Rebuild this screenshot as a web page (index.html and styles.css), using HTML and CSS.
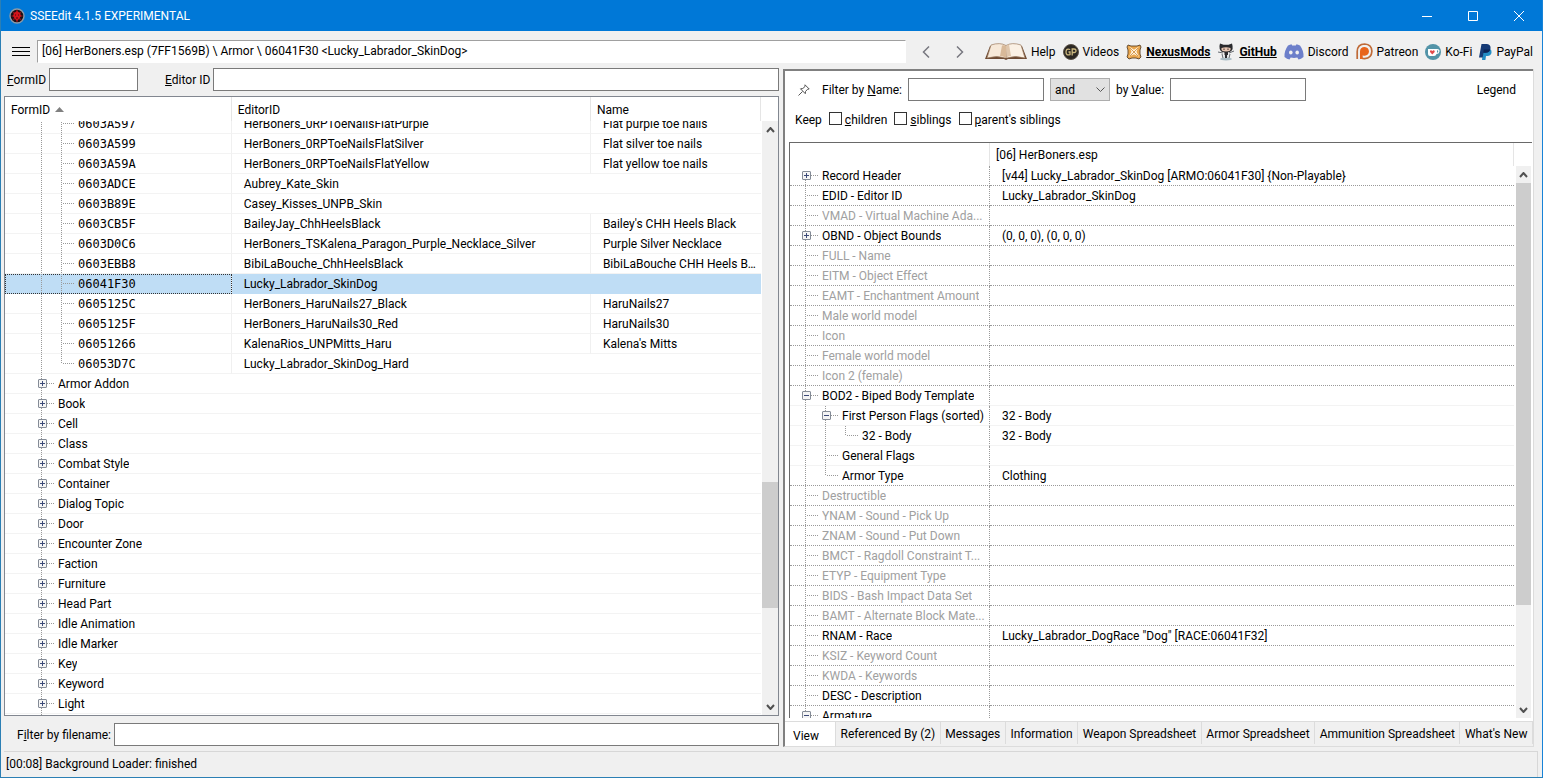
FILE: index.html
```html
<!DOCTYPE html>
<html lang="en">

<head>
    <meta charset="UTF-8" />
    <meta name="viewport" content="width=device-width, initial-scale=1.0" />
    <title>SSEEdit 4.1.5 EXPERIMENTAL</title>
    <link rel="stylesheet" href="styles.css">
</head>

<body>
    <header class="titlebar">
        <svg class="appIcon" viewBox="0 0 16 16" width="16" height="16">
            <circle cx="8" cy="8" r="7" fill="#191015" stroke="#8d9aa8" stroke-width="1.4" />
            <path d="M8 2v12M2.5 8h11M4 4l8 8M12 4l-8 8" stroke="#7c1218" stroke-width="1.6" />
            <path d="M5 5l3-2 3 2 1 3-2 3-2 2-2-2-2-3z" fill="#d3141b" />
            <path d="M6 7h1M9 7h1M8 9v2" stroke="#4b070b" />
        </svg>
        <h1>SSEEdit 4.1.5 EXPERIMENTAL</h1>
        <div class="windowButtons">
            <button aria-label="Minimize"><svg width="10" height="10"><path d="M0 5.5h10" /></svg></button>
            <button aria-label="Maximize"><svg width="10" height="10"><path d="M.5 .5h9v9h-9z" /></svg></button>
            <button aria-label="Close"><svg width="10" height="10"><path d="M0 0l10 10M10 0L0 10" /></svg></button>
        </div>
    </header>

    <div class="toolbar">
        <button class="menuButton" aria-label="Menu"><svg width="18" height="10"><path d="M0 .5h18M0 4.5h18M0 8.5h18" stroke="#000" /></svg></button>
        <input class="address" aria-label="Path" value="[06] HerBoners.esp (7FF1569B) \ Armor \ 06041F30 &lt;Lucky_Labrador_SkinDog&gt;">
        <div class="history">
            <button aria-label="Back"><svg width="8" height="12"><path d="M7 .5L1.500 6 7 11.500" /></svg></button>
            <button aria-label="Forward"><svg width="8" height="12"><path d="M1 .5L6.500 6 1 11.500" /></svg></button>
        </div>
        <nav class="links">
            <a href="#">
                <svg width="42" height="18" viewBox="0 0 42 18">
                    <path d="M5 3L0 16h19l2 1 2-1h19L37 3z" fill="#6d4a33" />
                    <path d="M6 2Q15-1 21 2.500L20.500 15Q12 12 2 15z" fill="#f6e8d8" stroke="#9b7b60" stroke-width=".7" />
                    <path d="M36 2Q27-1 21 2.500L21.500 15Q30 12 40 15z" fill="#fbf1e5" stroke="#9b7b60" stroke-width=".7" />
                    <path d="M17 2.500Q20 2 21 3V15Q18 13 15 13z" fill="#d8b999" />
                    <path d="M21 3Q23 1.500 24 1.500L26 13Q23 13 21.500 15z" fill="#dfc6ac" />
                </svg>Help</a>
            <a href="#">
                <svg width="16" height="16" viewBox="0 0 16 16">
                    <circle cx="8" cy="8" r="7.500" fill="#2b2722" stroke="#5a5146" />
                    <path d="M7.200 5.500Q3 4 3 8t4 2.600V8H5.500M9.200 11.500V5h1.800q2 0 2 1.800T11 8.500H9.200" fill="none" stroke="#cdb980" stroke-width="1.300" />
                </svg>Videos</a>
            <a href="#" class="strong">
                <svg width="16" height="16" viewBox="0 0 16 16">
                    <path d="M2 1l3 1h6l3-1 1 2-1 3v4l1 3-2 2-3-1H6l-3 1-2-2 1-3V6L1 3z" fill="#e9a54c" stroke="#5b4329" stroke-width=".9" />
                    <path d="M3.500 2.800l4.500 3 4.500-3-2 5 2.500 5-5-2.500-5 2.500 2.500-5z" fill="#fff3dc" />
                    <path d="M4 4l8 8M12 4l-8 8" stroke="#c98434" stroke-width=".8" />
                </svg>NexusMods</a>
            <a href="#" class="strong">
                <svg width="18" height="18" viewBox="0 0 18 18">
                    <ellipse cx="9" cy="16" rx="6" ry="1.500" fill="#a9bcc5" />
                    <path d="M3 .5l3.500 1.200h5L15 .5q1 3 .6 5.500-1 3-4.600 3.300V15H7.500V9.500Q3.500 9 2.700 6 2 3 3 .5z" fill="#2a2a2d" />
                    <path d="M4.500 5q4.500-1.500 9 0 1 3.500-4.500 3.500T4.500 5z" fill="#e6c5b2" />
                    <path d="M7 5.500v1.500M11 5.500v1.500" stroke="#45302b" />
                    <path d="M1 9l5 1M17 8l-5 2M6 15l-1-4M12 15l1-4" stroke="#666b70" fill="none" />
                    <path d="M7 12h1v3H7zM10 12h1v3h-1z" fill="#dce3e7" />
                </svg>GitHub</a>
            <a href="#">
                <svg width="20" height="16" viewBox="0 0 20 16">
                    <path d="M4 1.500Q6 .5 7.500.3L8.200 1.500h3.600L12.500.3Q14 .5 16 1.500 20 7 19.500 13 17 15 14.500 15.500L13.300 13.500Q10 14.300 6.700 13.500L5.500 15.500Q3 15 .5 13 0 7 4 1.500z" fill="#6c7fca" />
                    <ellipse cx="6.800" cy="8.500" rx="1.800" ry="2" fill="#f0f0f0" />
                    <ellipse cx="13.200" cy="8.500" rx="1.800" ry="2" fill="#f0f0f0" />
                </svg>Discord</a>
            <a href="#">
                <svg width="17" height="17" viewBox="0 0 17 17">
                    <path d="M1.200 16V8.500Q1.500 1 8.700 1q7 .4 7.200 7.300-.4 7-7.200 7.300-2 0-3.300-.7" fill="none" stroke="#bf6a37" stroke-width="1.700" />
                    <path d="M4 16V8.500Q4 4 8.700 4q4 .3 4.300 4.500-.4 4-4.300 4.200-1.200 0-2-.5V16z" fill="#e8641b" />
                </svg>Patreon</a>
            <a href="#">
                <svg width="16" height="16" viewBox="0 0 16 16">
                    <circle cx="8" cy="8" r="8" fill="#5394a8" />
                    <path d="M3 5h9q3 0 2.500 2.500T11.500 10Q11 12 9 12H5q-2 0-2-2z" fill="#fff" />
                    <path d="M12 6.300q1.500 0 1.200 1.200T12 8.700z" fill="#5394a8" />
                    <path d="M7.300 10.500L5 8q-.3-2 1.200-1.700l1.100.7 1.100-.7Q10 6 9.700 8z" fill="#e34b4b" />
                </svg>Ko-Fi</a>
            <a href="#">
                <svg width="13" height="16" viewBox="0 0 13 16">
                    <path d="M4 5h7q2 1 1.500 4-1 3-4 3H7l-.6 4H3z" fill="#238dc5" />
                    <path d="M2.500 0H8q4 .5 3.500 4.500Q11 8.700 6.500 8.700H4.500L3.700 13.500H0z" fill="#153a75" />
                    <path d="M4.800 5.500h6.400Q10 8.700 6.500 8.700H4.300z" fill="#0b2456" />
                </svg>PayPal</a>
        </nav>
    </div>

    <main class="panes">
        <section class="leftPane">
            <div class="search">
                <label for="formId"><u>F</u>ormID</label>
                <input id="formId" class="formIdBox">
                <label for="editorId"><u>E</u>ditor ID</label>
                <input id="editorId" class="grow">
            </div>
            <div class="treeBox navTree">
                <div class="treeView" id="navView">
                    <table>
                        <colgroup>
                            <col class="colForm">
                            <col class="colEditor">
                            <col>
                        </colgroup>
                        <thead>
                            <tr>
                                <th>FormID <svg width="9" height="5"><path d="M0 5L4.500 0 9 5z" fill="#808080" /></svg></th>
                                <th>EditorID</th>
                                <th>Name</th>
                            </tr>
                        </thead>
                        <tbody id="navRows"></tbody>
                    </table>
                </div>
                <div class="scrollbar">
                    <button aria-label="Scroll up"><svg width="9" height="6"><path d="M1 5l3.500-4L8 5" /></svg></button>
                    <div class="track"><div class="thumb navThumb"></div></div>
                    <button aria-label="Scroll down"><svg width="9" height="6"><path d="M1 1l3.500 4L8 1" /></svg></button>
                </div>
            </div>
            <div class="fileFilter">
                <label for="fileName">F<u>i</u>lter by filename:</label>
                <input id="fileName" class="grow">
            </div>
        </section>

        <section class="rightPane">
            <div class="viewPage">
                <div class="filters">
                    <button class="pin" aria-label="Pin"><svg width="12" height="12" viewBox="0 0 12 12"><path d="M7 .8L11.200 5 9.500 5.300 7.500 7.500 7.300 9.700 2.500 4.800 4.800 4.500 7 2.500zM4.500 7.500L.5 11.500" /></svg></button>
                    <label for="byName">Filter by <u>N</u>ame:</label>
                    <input id="byName">
                    <select aria-label="Combine filters">
                        <option>and</option>
                        <option>or</option>
                    </select>
                    <label for="byValue">by <u>V</u>alue:</label>
                    <input id="byValue">
                    <a href="#" class="legend">Legend</a>
                </div>
                <div class="keep">
                    <span>Keep</span>
                    <label><input type="checkbox"><span><u>c</u>hildren</span></label>
                    <label><input type="checkbox"><span><u>s</u>iblings</span></label>
                    <label><input type="checkbox"><span><u>p</u>arent's siblings</span></label>
                </div>
                <div class="treeBox recordTree">
                    <div class="treeView">
                        <table>
                            <colgroup>
                                <col class="colField">
                                <col>
                            </colgroup>
                            <thead>
                                <tr>
                                    <th></th>
                                    <th>[06] HerBoners.esp</th>
                                </tr>
                            </thead>
                            <tbody id="recordRows"></tbody>
                        </table>
                    </div>
                    <div class="scrollbar">
                        <button aria-label="Scroll up"><svg width="9" height="6"><path d="M1 5l3.500-4L8 5" /></svg></button>
                        <div class="track"><div class="thumb recordThumb"></div></div>
                        <button aria-label="Scroll down"><svg width="9" height="6"><path d="M1 1l3.500 4L8 1" /></svg></button>
                    </div>
                </div>
            </div>
            <div class="tabs">
                <button class="active">View</button>
                <button>Referenced By (2)</button>
                <button>Messages</button>
                <button>Information</button>
                <button>Weapon Spreadsheet</button>
                <button>Armor Spreadsheet</button>
                <button>Ammunition Spreadsheet</button>
                <button>What's New</button>
            </div>
        </section>
    </main>

    <footer class="status">[00:08] Background Loader: finished</footer>
    <script src="script.js"></script>
</body>

</html>
```
FILE: styles.css
```css
* {
    box-sizing: border-box;
}

body {
    margin: 0;
    height: 100vh;
    display: flex;
    flex-direction: column;
    overflow: hidden;
    background: #f0f0f0;
    border: 1px solid #2b7fb4;
    border-top: none;
    border-right-color: #1883d7;
    color: #000;
    font-family: Roboto, "Open Sans", sans-serif;
    font-size: 12px;
    line-height: 16px;
}

button,
input,
select {
    font: inherit;
    color: inherit;
    margin: 0;
}

button {
    display: flex;
    align-items: center;
    justify-content: center;
    padding: 0;
    border: none;
    background: none;
}

svg {
    flex: none;
}

a {
    color: inherit;
    text-decoration: none;
}

input {
    height: 23px;
    min-width: 0;
    padding: 0 4px;
    border: 1px solid #7a7a7a;
    background: #fff;
}

.grow {
    flex: 1;
}

/* title bar */
.titlebar {
    display: flex;
    align-items: center;
    flex: none;
    height: 31px;
    padding-left: 8px;
    background: #0078d7;
    color: #fff;
}

.titlebar h1 {
    margin: 0 0 0 5px;
    font-size: 12px;
    font-weight: normal;
}

.windowButtons {
    display: flex;
    margin-left: auto;
}

.windowButtons button {
    width: 46px;
    height: 30px;
}

.windowButtons path {
    fill: none;
    stroke: #fff;
}

/* toolbar */
.toolbar {
    display: flex;
    align-items: center;
    flex: none;
    height: 37px;
    padding: 4px 9px 0 11px;
}

.menuButton {
    margin-right: 7px;
}

.address {
    flex: 1;
    padding-bottom: 2px;
    border-color: #a0a0a0 #fff #fff #a0a0a0;
}

.history {
    display: flex;
    gap: 26px;
    margin: 0 21px 0 16px;
}

.history path {
    fill: none;
    stroke: #77777f;
    stroke-width: 1.5;
}

.links {
    display: flex;
    gap: 7px;
}

.links a {
    display: flex;
    align-items: center;
    gap: 4px;
}

.links .strong {
    font-weight: bold;
    text-decoration: underline;
}

/* panes */
.panes {
    flex: 1;
    min-height: 0;
    display: grid;
    grid-template-columns: 782fr 751fr;
    padding-right: 8px;
}

.leftPane {
    display: flex;
    flex-direction: column;
    min-width: 0;
    min-height: 0;
    padding: 0 4px 0 3px;
}

.search,
.fileFilter {
    display: flex;
    align-items: center;
    flex: none;
    gap: 3px;
    padding-left: 3px;
}

.search {
    margin-bottom: 5px;
}

.formIdBox {
    width: 89px;
    margin-right: 24px;
}

.fileFilter {
    margin: 7px 0 5px;
    padding-left: 13px;
}

.treeBox {
    display: flex;
    flex: 1;
    min-height: 0;
    background: #fff;
    border: 1px solid #828790;
}

.treeView {
    flex: 1;
    min-width: 0;
    overflow: hidden;
}

table {
    width: 100%;
    table-layout: fixed;
    border-collapse: separate;
    border-spacing: 0;
}

th {
    position: sticky;
    top: 0;
    z-index: 1;
    height: 24px;
    padding: 1px 6px 0;
    background: #fff;
    border-right: 1px solid #e5e5e5;
    font-weight: normal;
    text-align: left;
}

th svg {
    margin: 0 0 2px 2px;
}

td {
    height: 20px;
    padding: 2px 4px 0 12px;
    border-bottom: 1px solid #f3f3f3;
    line-height: 17px;
    white-space: nowrap;
    overflow: hidden;
    text-overflow: ellipsis;
}

.colForm {
    width: 30%;
}

.colEditor {
    width: 47.5%;
}

.navTree td:not(:last-child) {
    border-right: 1px solid #f0f0f0;
}

.navTree .treeCell {
    padding: 0 0 0 26px;
}

.navTree .leaf {
    font-family: "DejaVu Sans Mono", monospace;
}

.navTree .selected td {
    background: #bfddf5;
    border-bottom-color: #bfddf5;
}

.navTree .selected .treeCell {
    outline: 1px dotted #333;
    outline-offset: -1px;
}

/* tree lines, 20px for each level */
.treeCell > div {
    display: flex;
    height: 19px;
}

.treeCell span {
    line-height: 21px;
    overflow: hidden;
    text-overflow: ellipsis;
}

.guide {
    flex: none;
    position: relative;
    width: 20px;
    height: 20px;
    background: repeating-linear-gradient(#999 0 1px, transparent 1px 2px) 10px 0 / 1px 100% no-repeat;
}

.node {
    width: 27px;
}

.node::before {
    content: "";
    position: absolute;
    left: 12px;
    top: 9px;
    width: 12px;
    height: 1px;
    background: repeating-linear-gradient(90deg, #999 0 1px, transparent 1px 2px);
}

.end {
    background-size: 1px 10px;
}

.start {
    background-position: 10px 10px;
}

.box {
    position: absolute;
    left: 7px;
    top: 5px;
    width: 9px;
    height: 9px;
    border: 1px solid #848b96;
    border-radius: 1px;
    background: linear-gradient(#3c4a78, #3c4a78) 1px 3px / 5px 1px no-repeat, #f4f4f4;
}

.box.plus {
    background: linear-gradient(#3c4a78, #3c4a78) 1px 3px / 5px 1px no-repeat, linear-gradient(#3c4a78, #3c4a78) 3px 1px / 1px 5px no-repeat, #f4f4f4;
}

/* scrollbars */
.scrollbar {
    display: flex;
    flex-direction: column;
    flex: none;
    width: 16px;
    margin: 24px 0 0 1px;
    background: #f0f0f0;
}

.scrollbar button {
    height: 17px;
}

.scrollbar path {
    fill: none;
    stroke: #505050;
    stroke-width: 2;
}

.track {
    position: relative;
    flex: 1;
}

.thumb {
    position: absolute;
    left: 0;
    width: 100%;
    background: #cdcdcd;
}

.navThumb {
    top: 61.5%;
    height: 22.5%;
}

.recordThumb {
    top: 0;
    height: 81.5%;
}

/* record view */
.rightPane {
    display: flex;
    flex-direction: column;
    min-width: 0;
    min-height: 0;
    margin: 1px 0 4px;
    border-left: 2px solid #808080;
    border-right: 1px solid #dcdcdc;
    border-bottom: 1px solid #dcdcdc;
}

.viewPage {
    display: flex;
    flex-direction: column;
    flex: 1;
    min-height: 0;
    padding: 7px 1px 3px 4px;
    background: #fff;
    border-top: 2px solid #808080;
    border-bottom: 1px solid #dcdcdc;
}

.filters {
    display: flex;
    align-items: center;
    flex: none;
    gap: 6px;
    padding: 0 16px 0 9px;
}

.filters input {
    width: 136px;
}

.filters select {
    appearance: none;
    width: 60px;
    height: 23px;
    padding: 0 4px;
    border: 1px solid #adadad;
    border-radius: 0;
    background: #e1e1e1 url("data:image/svg+xml,%3Csvg xmlns='http://www.w3.org/2000/svg' width='9' height='6'%3E%3Cpath d='M.5 .5l4 4 4-4' fill='none' stroke='%23555'/%3E%3C/svg%3E") right 4px center no-repeat;
}

.pin {
    margin-right: 6px;
}

.pin path {
    fill: none;
    stroke: #555;
}

.legend {
    margin-left: auto;
}

.keep {
    display: flex;
    flex: none;
    gap: 7px;
    height: 41px;
    padding: 11px 0 0 6px;
}

.keep label {
    display: flex;
    gap: 3px;
}

.keep input {
    appearance: none;
    width: 13px;
    height: 13px;
    padding: 0;
    border-color: #333;
}

.recordTree {
    border-color: #696969;
    border-right: none;
    border-bottom: none;
}

.recordTree .scrollbar {
    width: 15px;
    margin: 23px 1px 0 2px;
}

.recordTree th {
    height: 23px;
}

.colField {
    width: 200px;
}

.recordTree .treeCell {
    padding: 0 2px 0 5px;
    border-right: 1px dotted #999;
}

.recordTree .groupEnd td {
    border-bottom: 1px dotted #999;
}

.unset {
    color: #a0a0a0;
}

/* bottom tabs */
.tabs {
    display: flex;
    flex: none;
    height: 24px;
}

.tabs button {
    flex: 1 0 auto;
    height: 22px;
    padding: 1px 4px 0;
    border-right: 1px solid #dcdcdc;
    white-space: nowrap;
}

.tabs .active {
    flex: none;
    justify-content: flex-start;
    width: 51px;
    height: 24px;
    padding: 3px 0 0 8px;
    background: #fff;
}

.status {
    flex: none;
    height: 26px;
    margin: 0 4px 0 3px;
    padding: 4px 2px;
    border-top: 1px solid #d7d7d7;
    border-right: 1px solid #d7d7d7;
}
```
FILE: script.js
```js
const forms = [
    ["0603A597", "HerBoners_0RPToeNailsFlatPurple", "Flat purple toe nails"],
    ["0603A599", "HerBoners_0RPToeNailsFlatSilver", "Flat silver toe nails"],
    ["0603A59A", "HerBoners_0RPToeNailsFlatYellow", "Flat yellow toe nails"],
    ["0603ADCE", "Aubrey_Kate_Skin"],
    ["0603B89E", "Casey_Kisses_UNPB_Skin"],
    ["0603CB5F", "BaileyJay_ChhHeelsBlack", "Bailey's CHH Heels Black"],
    ["0603D0C6", "HerBoners_TSKalena_Paragon_Purple_Necklace_Silver", "Purple Silver Necklace"],
    ["0603EBB8", "BibiLaBouche_ChhHeelsBlack", "BibiLaBouche CHH Heels B..."],
    ["06041F30", "Lucky_Labrador_SkinDog"],
    ["0605125C", "HerBoners_HaruNails27_Black", "HaruNails27"],
    ["0605125F", "HerBoners_HaruNails30_Red", "HaruNails30"],
    ["06051266", "KalenaRios_UNPMitts_Haru", "Kalena's Mitts"],
    ["06053D7C", "Lucky_Labrador_SkinDog_Hard"]
];

const groups = ["Armor Addon", "Book", "Cell", "Class", "Combat Style", "Container", "Dialog Topic", "Door",
    "Encounter Zone", "Faction", "Furniture", "Head Part", "Idle Animation", "Idle Marker", "Key", "Keyword", "Light"];

// level, label, value, box ("+" or "-"), set
const fields = [
    [1, "Record Header", "[v44] Lucky_Labrador_SkinDog [ARMO:06041F30] {Non-Playable}", "+", true],
    [1, "EDID - Editor ID", "Lucky_Labrador_SkinDog", "", true],
    [1, "VMAD - Virtual Machine Ada..."],
    [1, "OBND - Object Bounds", "(0, 0, 0), (0, 0, 0)", "+", true],
    [1, "FULL - Name"],
    [1, "EITM - Object Effect"],
    [1, "EAMT - Enchantment Amount"],
    [1, "Male world model"],
    [1, "Icon"],
    [1, "Female world model"],
    [1, "Icon 2 (female)"],
    [1, "BOD2 - Biped Body Template", "", "-", true],
    [2, "First Person Flags (sorted)", "32 - Body", "-", true],
    [3, "32 - Body", "32 - Body", "", true],
    [2, "General Flags", "", "", true],
    [2, "Armor Type", "Clothing", "", true],
    [1, "Destructible"],
    [1, "YNAM - Sound - Pick Up"],
    [1, "ZNAM - Sound - Put Down"],
    [1, "BMCT - Ragdoll Constraint T..."],
    [1, "ETYP - Equipment Type"],
    [1, "BIDS - Bash Impact Data Set"],
    [1, "BAMT - Alternate Block Mate..."],
    [1, "RNAM - Race", "Lucky_Labrador_DogRace \"Dog\" [RACE:06041F32]", "", true],
    [1, "KSIZ - Keyword Count"],
    [1, "KWDA - Keywords"],
    [1, "DESC - Description", "", "", true],
    [1, "Armature", "", "-", true]
];

function treeCell(level, label, box, extra) {
    let guides = "";
    for (let i = 1; i < level; i++) {
        guides += '<i class="guide"></i>';
    }
    const boxHtml = box ? `<b class="box ${box === "+" ? "plus" : ""}"></b>` : "";
    return `<div>${guides}<i class="guide node ${extra}">${boxHtml}</i><span>${label}</span></div>`;
}

let html = "";
forms.forEach(([id, editor, name], i) => {
    const last = i === forms.length - 1 ? "end" : "";
    html += `<tr class="${id === "06041F30" ? "selected" : ""}"><td class="treeCell leaf">${treeCell(2, id, "", last)}</td>`;
    html += name ? `<td>${editor}</td><td>${name}</td></tr>` : `<td colspan="2">${editor}</td></tr>`;
});
groups.forEach(group => {
    html += `<tr><td class="treeCell" colspan="3">${treeCell(1, group, "+", "")}</td></tr>`;
});
html += '<tr><td class="treeCell" colspan="3"><div><i class="guide"></i></div></td></tr>';
document.getElementById("navRows").innerHTML = html;
document.getElementById("navView").scrollTop = 7;

html = "";
fields.forEach(([level, label, value, box, set], i) => {
    const next = fields[i + 1];
    // dotted separator only between top level fields
    const groupEnd = next && next[0] === 1;
    let extra = next && next[0] < level ? "end" : "";
    if (i === 0) {
        extra = "start";
    }
    html += `<tr class="${groupEnd ? "groupEnd" : ""}"><td class="treeCell ${set ? "" : "unset"}">${treeCell(level, label, box, extra)}</td><td>${value || ""}</td></tr>`;
});
document.getElementById("recordRows").innerHTML = html;
```
